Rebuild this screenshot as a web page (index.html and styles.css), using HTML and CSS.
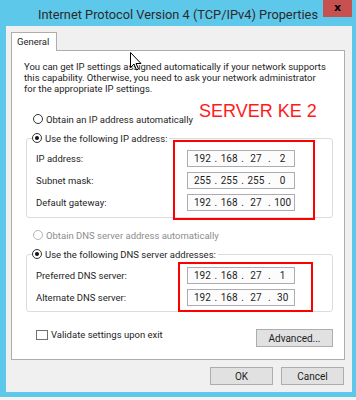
FILE: index.html
```html
<!DOCTYPE html>
<html lang="en">
<head>
    <meta charset="UTF-8">
    <meta name="viewport" content="width=device-width, initial-scale=1.0">
    <title>Internet Protocol Version 4 (TCP/IPv4) Properties</title>
    <link rel="stylesheet" href="styles.css">
</head>
<body>
    <div class="titlebar">
        <span class="title">Internet Protocol Version 4 (TCP/IPv4) Properties</span>
        <div class="close">x</div>
    </div>

    <div class="window">
        <div class="tabs">
            <div class="tab">General</div>
        </div>
        <div class="panel">
            <p class="intro">You can get IP settings assigned automatically if your network supports<br>this capability. Otherwise, you need to ask your network administrator<br>for the appropriate IP settings.</p>

            <label class="option"><span class="radio"></span>Obtain an IP address automatically</label>
            <fieldset class="group">
                <legend><label class="option"><span class="radio checked"></span>Use the following IP address:</label></legend>
                <div class="field">
                    <span class="field-label">IP address:</span>
                    <div class="ip"><span>192</span><i>.</i><span>168</span><i>.</i><span>27</span><i>.</i><span>2</span></div>
                </div>
                <div class="field">
                    <span class="field-label">Subnet mask:</span>
                    <div class="ip"><span>255</span><i>.</i><span>255</span><i>.</i><span>255</span><i>.</i><span>0</span></div>
                </div>
                <div class="field">
                    <span class="field-label">Default gateway:</span>
                    <div class="ip"><span>192</span><i>.</i><span>168</span><i>.</i><span>27</span><i>.</i><span>100</span></div>
                </div>
            </fieldset>

            <label class="option option-dns disabled"><span class="radio"></span>Obtain DNS server address automatically</label>
            <fieldset class="group group-dns">
                <legend><label class="option"><span class="radio checked"></span>Use the following DNS server addresses:</label></legend>
                <div class="field">
                    <span class="field-label">Preferred DNS server:</span>
                    <div class="ip"><span>192</span><i>.</i><span>168</span><i>.</i><span>27</span><i>.</i><span>1</span></div>
                </div>
                <div class="field">
                    <span class="field-label">Alternate DNS server:</span>
                    <div class="ip"><span>192</span><i>.</i><span>168</span><i>.</i><span>27</span><i>.</i><span>30</span></div>
                </div>
            </fieldset>

            <div class="panel-footer">
                <label class="check"><span class="box"></span>Validate settings upon exit</label>
                <button class="btn btn-advanced">Advanced...</button>
            </div>
        </div>
        <div class="actions">
            <button class="btn">OK</button>
            <button class="btn">Cancel</button>
        </div>
    </div>
    <div class="taskbar"></div>

    <!-- annotations drawn over the screenshot -->
    <div class="note">SERVER KE 2</div>
    <div class="mark mark-ip"></div>
    <div class="mark mark-dns"></div>

    <svg class="cursor" width="12" height="19" viewBox="0 0 12 19">
        <path d="M0.5 0.5 L0.5 15.5 L4 12 L6.5 18 L8.5 17 L6 11.5 L11 11.5 Z" fill="#fff" stroke="#000" stroke-width="1"/>
    </svg>
</body>
</html>
```

FILE: styles.css
```css
body {
    margin: 0;
    width: 356px;
    height: 400px;
    overflow: hidden;
    position: relative;
    background-color: #5ec8eb;
    font-family: Roboto, sans-serif;
    font-size: 9.5px;
    color: #1e1e1e;
}
.titlebar {
    height: 26px;
    display: flex;
    justify-content: center;
    align-items: center;
    position: relative;
}
.title {
    font-size: 12.8px;
    color: #2b2b2b;
    margin-top: 2px;
}
.close {
    position: absolute;
    top: 0;
    right: 4px;
    width: 29px;
    height: 17px;
    background-color: #c75050;
    color: #000;
    font-family: "DejaVu Sans", sans-serif;
    font-size: 11px;
    font-weight: bold;
    text-align: center;
    line-height: 15px;
}
.window {
    margin-left: 6px;
    width: 346px;
    height: 366px;
    box-sizing: border-box;
    padding: 6px 7px 0 5px;
    background-color: #f0f0f0;
}
.tabs {
    display: flex;
    height: 18px;
}
.tab {
    width: 46px;
    box-sizing: border-box;
    border: 1px solid #adadad;
    border-bottom: none;
    background: #fff;
    padding-left: 5px;
    line-height: 17px;
    position: relative;
    z-index: 1;
    height: 19px;
}
.panel {
    height: 310px;
    box-sizing: border-box;
    border: 1px solid #adadad;
    background: #fff;
    padding: 0 11px 0 12px;
}
.intro {
    margin: 10px 0 0;
    line-height: 11px;
    white-space: nowrap;
}
.option {
    display: flex;
    align-items: center;
    height: 14px;
    white-space: nowrap;
}
.panel > .option {
    margin-top: 18px;
    padding-left: 9px;
}
.panel > .option-dns {
    margin-top: 10px;
}
.disabled {
    color: #8d8d8d;
}
.radio {
    width: 10px;
    height: 10px;
    box-sizing: border-box;
    border: 1px solid #333;
    border-radius: 50%;
    background: #fff;
    margin-right: 3px;
    position: relative;
}
.disabled .radio {
    border-color: #b5b5b5;
}
.radio.checked::after {
    content: "";
    position: absolute;
    left: 2px;
    top: 2px;
    width: 4px;
    height: 4px;
    border-radius: 50%;
    background: #111;
}
.group {
    margin: 5px 0 0 2px;
    border: 1px solid #dcdcdc;
    border-radius: 3px;
    padding: 5px 0 6px 9px;
}
.group-dns {
    padding-top: 6px;
    padding-bottom: 5px;
}
.group legend {
    padding: 0 2px 0 0;
    margin-left: -4px;
    background: #fff;
}
.field {
    display: flex;
    align-items: center;
    height: 17px;
    margin-bottom: 5px;
}
.field:last-child {
    margin-bottom: 0;
}
.field-label {
    width: 151px;
}
.ip {
    width: 108px;
    height: 17px;
    box-sizing: border-box;
    border: 1px solid #abadb3;
    background: #fcfcfc;
    display: flex;
    align-items: center;
    padding-left: 3px;
    font-size: 10px;
}
.ip span {
    width: 23px;
    text-align: center;
}
.ip i {
    font-style: normal;
    width: 4px;
    text-align: center;
}
.panel-footer {
    display: flex;
    justify-content: space-between;
    align-items: flex-start;
    margin-top: 17px;
}
.check {
    display: flex;
    align-items: center;
    margin: 0 0 0 12px;
    line-height: 11px;
}
.box {
    width: 12px;
    height: 10px;
    box-sizing: border-box;
    border: 1px solid #707070;
    background: #fff;
    margin-right: 3px;
}
.btn {
    font-family: inherit;
    font-size: 10px;
    color: #1e1e1e;
    background-color: #e1e1e1;
    border: 1px solid #adadad;
    height: 18px;
    padding: 0;
    cursor: pointer;
}
.btn-advanced {
    width: 77px;
}
.actions {
    display: flex;
    justify-content: flex-end;
    gap: 8px;
    margin-top: 7px;
    margin-right: 1px;
}
.actions .btn {
    width: 63px;
}
.taskbar {
    margin-top: 5px;
    height: 3px;
    background: #f4f4f4;
}
.note {
    position: absolute;
    left: 199px;
    top: 101px;
    font-family: "Liberation Sans", Arial, sans-serif;
    font-size: 18px;
    color: #ff1a1a;
}
.mark {
    position: absolute;
    border: 2px solid #ff0000;
    box-sizing: border-box;
}
.mark-ip {
    left: 173px;
    top: 140px;
    width: 142px;
    height: 80px;
}
.mark-dns {
    left: 178px;
    top: 262px;
    width: 135px;
    height: 50px;
}
.cursor {
    position: absolute;
    left: 130px;
    top: 52px;
}
```
